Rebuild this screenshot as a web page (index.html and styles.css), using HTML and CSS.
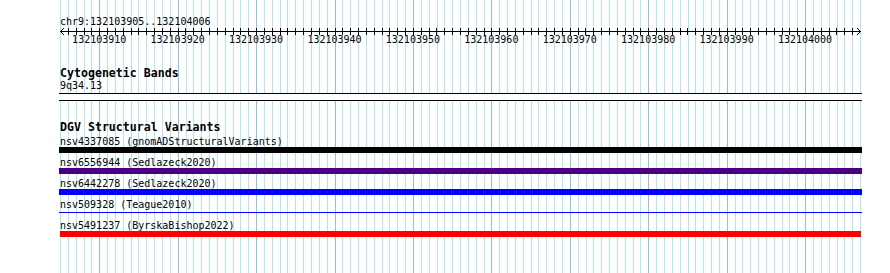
FILE: index.html
```html
<!DOCTYPE html>
<html lang="en">
<head>
    <meta charset="UTF-8">
    <title>chr9:132103905..132104006</title>
    <link rel="stylesheet" href="styles.css">
</head>
<body>
    <div class="view">
        <!-- one gridline per base, filled in by the script below -->
        <div class="grid" id="grid"></div>

        <div class="content">
            <div class="location">chr9:132103905..132104006</div>
            <svg class="ruler" id="ruler" width="803" height="8" shape-rendering="crispEdges"></svg>
            <div class="tick-labels" id="tickLabels"></div>

            <div class="track-title band-title">Cytogenetic Bands</div>
            <div class="band-name">9q34.13</div>
            <div class="separator"></div>

            <div class="track-title dgv-title">DGV Structural Variants</div>
            <div class="variant">
                <div class="variant-name">nsv4337085 (gnomADStructuralVariants)</div>
                <div class="variant-bar black"></div>
            </div>
            <div class="variant">
                <div class="variant-name">nsv6556944 (Sedlazeck2020)</div>
                <div class="variant-bar purple"></div>
            </div>
            <div class="variant">
                <div class="variant-name">nsv6442278 (Sedlazeck2020)</div>
                <div class="variant-bar blue"></div>
            </div>
            <div class="variant">
                <div class="variant-name">nsv509328 (Teague2010)</div>
                <div class="variant-bar thin"></div>
            </div>
            <div class="variant">
                <div class="variant-name">nsv5491237 (ByrskaBishop2022)</div>
                <div class="variant-bar red"></div>
            </div>
        </div>
    </div>

    <script>
        var start = 132103905;
        var bases = 102;
        var px = 800 / bases;

        var grid = document.getElementById("grid");
        for (var i = 0; i < bases; i++) {
            var line = document.createElement("div");
            line.className = (start + i) % 10 === 0 ? "gridline major" : "gridline";
            grid.appendChild(line);
        }

        // axis, ticks and arrow heads
        var d = "M1 4.5H802";
        for (var t = 1; t < bases; t++) {
            var x = 1 + Math.round(t * px) + 0.5;
            d += "M" + x + " 1V8";
        }
        var ruler = document.getElementById("ruler");
        ruler.innerHTML =
            '<path d="' + d + '" stroke="#000" fill="none"/>' +
            '<path d="M5 1L1.5 4.5L5 8M798 1L801.5 4.5L798 8" stroke="#000" fill="none" shape-rendering="auto"/>';

        var labels = document.getElementById("tickLabels");
        for (var n = start + 5; n < start + bases; n += 10) {
            var label = document.createElement("div");
            label.className = "tick-label";
            label.innerText = n;
            labels.appendChild(label);
        }
    </script>
</body>
</html>
```

FILE: styles.css
```css
body {
    margin: 0;
    background-color: #ffffff;
    color: #000000;
    font-family: "DejaVu Sans Mono", "Liberation Mono", monospace;
    font-size: 10px;
}
.view {
    position: relative;
    margin-left: 59px;
    width: 803px;
    height: 273px;
    overflow: hidden;
}
.grid {
    position: absolute;
    top: 0;
    bottom: 0;
    left: 1px;
    width: 800px;
    display: flex;
    border-right: 1px solid #aee8ee;
}
.gridline {
    flex: 1 1 0;
    border-left: 1px solid #aee8ee; /* minor: one per base */
}
.gridline.major {
    border-left-color: #8cc6e6; /* every 10 bases */
}
.content {
    position: relative;
}
.location {
    padding-top: 17px;
    padding-left: 1px;
    height: 10px;
    line-height: 10px;
}
.ruler {
    display: block;
}
.tick-labels {
    display: flex;
    margin-left: 1px;
    height: 10px;
    line-height: 10px;
}
.tick-label {
    flex: none;
    width: 78.431px;
    text-align: center;
}
.track-title {
    padding-left: 1px;
    font-weight: bold;
    font-size: 11.6px;
    line-height: 12px;
}
.band-title {
    margin-top: 22px;
}
.band-name {
    margin-top: 2px;
    padding-left: 1px;
    line-height: 10px;
}
.separator {
    margin-top: 2px;
    height: 6px;
    background-color: #ffffff;
    border-top: 1px solid #000000;
    border-bottom: 1px solid #000000;
}
.dgv-title {
    margin-top: 20px;
}
.variant {
    height: 21px;
}
.dgv-title + .variant {
    margin-top: 3px;
}
.variant-name {
    padding-left: 1px;
    line-height: 11px;
    white-space: nowrap;
}
.variant-bar {
    height: 6px;
}
.variant-bar.black { background-color: #000000; }
.variant-bar.purple { background-color: #4b0082; }
.variant-bar.blue { background-color: #0000ff; }
.variant-bar.red {
    margin-left: 1px;
    width: 801px;
    background-color: #ff0000;
}
.variant-bar.thin {
    height: 1px;
    margin-top: 2px;
    background-color: #0000ff;
}
```
